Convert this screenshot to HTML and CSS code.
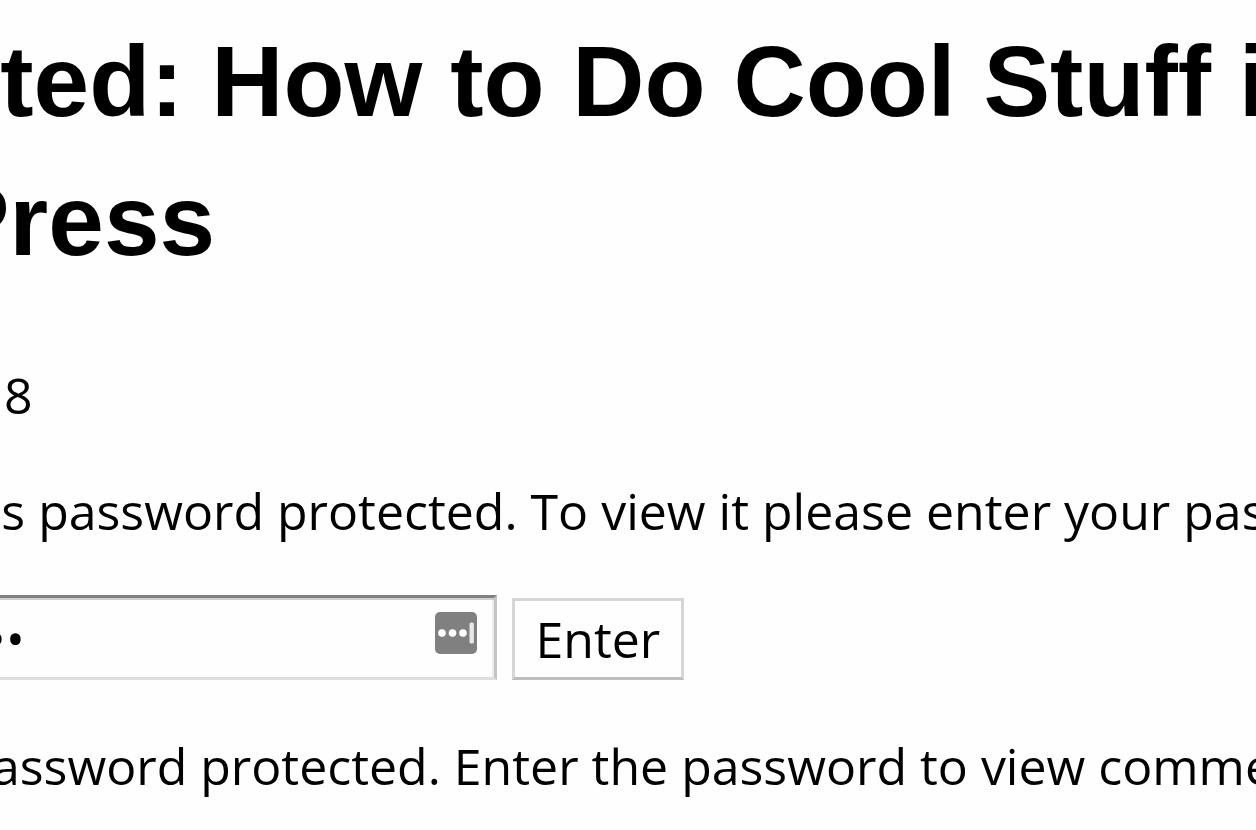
FILE: index.html
```html
<!DOCTYPE html>
<html lang="en">
<head>
<meta charset="utf-8">
<title>Protected: How to Do Cool Stuff in WordPress</title>
<link rel="stylesheet" href="styles.css">
</head>
<body>
<article class="post">
  <h1 class="title">Protected: How to Do Cool Stuff in<br>WordPress</h1>
  <p class="date">August 1, 2018</p>
  <p class="notice">This content is password protected. To view it please enter your password below:</p>
  <form class="password-form">
    <label class="label" for="post-password">Password:</label>
    <span class="field">
      <input class="input" id="post-password" type="password" value="pass">
      <svg class="manager" viewBox="0 0 42 42" aria-hidden="true">
        <rect width="42" height="42" rx="5" fill="#808080"/>
        <circle cx="7" cy="21" r="3.8" fill="#fff"/>
        <circle cx="17.5" cy="21" r="3.8" fill="#fff"/>
        <circle cx="28" cy="21" r="3.8" fill="#fff"/>
        <rect x="34.5" y="10.5" width="4.4" height="21" rx="1.5" fill="#e8e8e8"/>
      </svg>
    </span>
    <button class="enter" type="button">Enter</button>
  </form>
  <p class="comments">This post is password protected. Enter the password to view comments.</p>
</article>
</body>
</html>
```
FILE: styles.css
```css
body {
  margin: 0;
  overflow: hidden;
  background: #fefefe;
  color: #000;
  font: 50px/75px "Open Sans", "Noto Sans", sans-serif;
}

.post {
  margin-left: -311px;
  padding-top: 12px;
  white-space: nowrap;
}

.title {
  margin: 0 0 68px;
  font: bold 100px/139px "Liberation Sans", Arial, sans-serif;
}

.date {
  margin: 0 0 41px;
}

.notice {
  margin: 0 0 46px;
}

.password-form {
  display: flex;
  align-items: flex-end;
  gap: 15px;
  margin: 0 0 49px;
}

.field {
  position: relative;
  display: flex;
}

.input {
  box-sizing: border-box;
  width: 554px;
  height: 85px;
  padding: 0 4px;
  border: 3px solid;
  border-color: #808280 #c4c4c4 #dedede #808280;
  border-radius: 0;
  outline: 0;
  background: #fefefe;
  box-shadow: inset 0 2px #cfcfcf, inset -2px 0 #ededed;
  color: #000;
  font: inherit;
}

.manager {
  position: absolute;
  top: 17px;
  right: 20px;
  width: 42px;
  height: 42px;
}

.enter {
  box-sizing: border-box;
  height: 82px;
  padding: 0 21px;
  border: 3px solid #d6d6d6;
  border-bottom-color: #bdbdbd;
  background: #fefefe;
  color: #000;
  font: inherit;
}

.comments {
  margin: 0;
}
```
